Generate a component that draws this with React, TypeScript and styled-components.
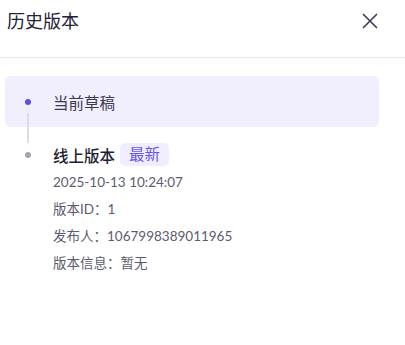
import styled, { createGlobalStyle } from "styled-components";

const GlobalStyle = createGlobalStyle`
  html, body {
    margin: 0;
    padding: 0;
    background: #ffffff;
  }
  body {
    font-family: Lato, "Noto Sans CJK SC", sans-serif;
    width: 405px;
    height: 345px;
    overflow: hidden;
  }
`;

interface Version {
  title: string;
  latest?: boolean;
  current?: boolean;
  time?: string;
  id?: string;
  publisher?: string;
  info?: string;
}

const versions: Version[] = [
  { title: "当前草稿", current: true },
  {
    title: "线上版本",
    latest: true,
    time: "2025-10-13 10:24:07",
    id: "1",
    publisher: "1067998389011965",
    info: "暂无",
  },
];

const CloseIcon = () => (
  <svg width="16" height="16" viewBox="0 0 16 16" fill="none">
    <path d="M1.5 1.5L14.5 14.5M14.5 1.5L1.5 14.5" stroke="#3f3f5e" strokeWidth="1.7" strokeLinecap="round" />
  </svg>
);

const App = () => {
  return (
    <Panel>
      <GlobalStyle />
      <Header>
        <Title>历史版本</Title>
        <CloseButton aria-label="关闭">
          <CloseIcon />
        </CloseButton>
      </Header>
      <Timeline>
        {versions.map((v, i) => (
          <Item key={v.title} $active={!!v.current}>
            {i < versions.length - 1 && <Connector />}
            <Rail>
              <Dot $active={!!v.current} />
            </Rail>
            <Content>
              <TitleRow>
                <ItemTitle $bold={!v.current}>{v.title}</ItemTitle>
                {v.latest && <Badge>最新</Badge>}
              </TitleRow>
              {v.time && (
                <Meta>
                  <MetaLine>{v.time}</MetaLine>
                  <MetaLine>版本ID：{v.id}</MetaLine>
                  <MetaLine>发布人：{v.publisher}</MetaLine>
                  <MetaLine>版本信息：{v.info}</MetaLine>
                </Meta>
              )}
            </Content>
          </Item>
        ))}
      </Timeline>
    </Panel>
  );
};

const Panel = styled.div`
  width: 405px;
  height: 345px;
  background: #ffffff;
  display: flex;
  flex-direction: column;
`;

const Header = styled.div`
  box-sizing: border-box;
  height: 58px;
  padding: 9px 27px 0 7px;
  display: flex;
  align-items: flex-start;
  justify-content: space-between;
  border-bottom: 1px solid #e6e6ea;
`;

const Title = styled.h1`
  margin: 0;
  font-size: 18px;
  line-height: 24px;
  font-weight: 400;
  color: #22223a;
`;

const CloseButton = styled.button`
  border: none;
  background: none;
  padding: 0;
  margin-top: 4px;
  width: 16px;
  height: 16px;
  display: flex;
  cursor: pointer;
`;

const Timeline = styled.div`
  padding: 18px 26px 0 5px;
  display: flex;
  flex-direction: column;
`;

const Item = styled.div<{ $active: boolean }>`
  position: relative;
  display: flex;
  align-items: ${(p) => (p.$active ? "center" : "flex-start")};
  min-height: 51px;
  padding-top: ${(p) => (p.$active ? "0" : "16px")};
  border-radius: 6px;
  background: ${(p) => (p.$active ? "#f1effd" : "transparent")};
`;

const Connector = styled.div`
  position: absolute;
  left: 22px;
  top: 37px;
  width: 2px;
  height: 30px;
  background: #dcdce6;
`;

const Rail = styled.div`
  width: 48px;
  height: 23px;
  display: flex;
  align-items: center;
  padding-left: 20px;
  box-sizing: border-box;
`;

const Dot = styled.span<{ $active: boolean }>`
  width: 6px;
  height: 6px;
  border-radius: 50%;
  background: ${(p) => (p.$active ? "#5a4ff0" : "#a3a3b3")};
`;

const Content = styled.div`
  display: flex;
  flex-direction: column;
`;

const TitleRow = styled.div`
  display: flex;
  align-items: center;
  gap: 5px;
  height: 23px;
`;

const ItemTitle = styled.span<{ $bold: boolean }>`
  font-size: 15.5px;
  font-weight: ${(p) => (p.$bold ? 500 : 400)};
  color: ${(p) => (p.$bold ? "#1f1f33" : "#3a3a50")};
`;

const Badge = styled.span`
  height: 23px;
  line-height: 23px;
  padding: 0 9px;
  border-radius: 5px;
  background: #f0eefe;
  color: #6556ea;
  font-size: 15.5px;
`;

const Meta = styled.div`
  display: flex;
  flex-direction: column;
  padding-top: 3px;
`;

const MetaLine = styled.div`
  font-size: 13.5px;
  line-height: 27px;
  color: #5c5c70;
`;

export default App;
